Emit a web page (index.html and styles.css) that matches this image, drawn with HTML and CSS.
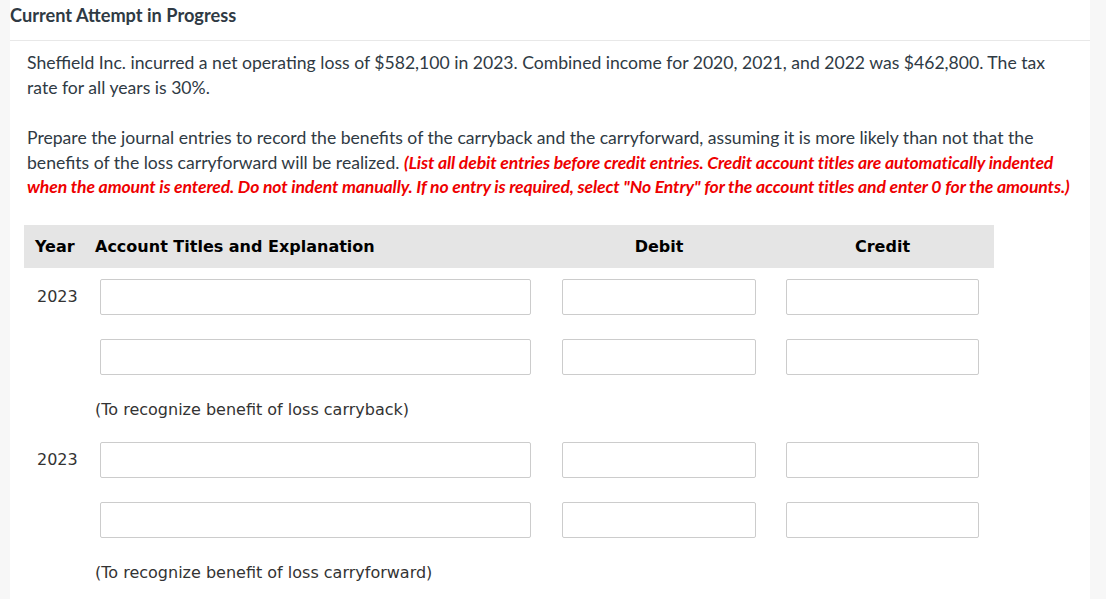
FILE: index.html
```html
<!DOCTYPE html>
<html>
<head>
<meta charset="utf-8">
<link rel="stylesheet" href="styles.css">
</head>
<body>
<div class="page">
  <div class="panel">
    <h1 class="title">Current Attempt in Progress</h1>
    <div class="content">
      <p class="para">Sheffield Inc. incurred a net operating loss of $582,100 in 2023. Combined income for 2020, 2021, and 2022 was $462,800. The tax rate for all years is 30%.</p>
      <p class="para para2">Prepare the journal entries to record the benefits of the carryback and the carryforward, assuming it is more likely than not that the benefits of the loss carryforward will be realized. <span class="warn">(List all debit entries before credit entries. Credit account titles are automatically indented when the amount is entered. Do not indent manually. If no entry is required, select "No Entry" for the account titles and enter 0 for the amounts.)</span></p>
      <div class="journal">
        <div class="head year-h">Year</div>
        <div class="head acct-h">Account Titles and Explanation</div>
        <div class="head num-h">Debit</div>
        <div class="head num-h">Credit</div>

        <div class="cell year">2023</div>
        <div class="cell acct"><input class="box" type="text"></div>
        <div class="cell num"><input class="box" type="text"></div>
        <div class="cell num"><input class="box" type="text"></div>

        <div class="cell year"></div>
        <div class="cell acct"><input class="box" type="text"></div>
        <div class="cell num"><input class="box" type="text"></div>
        <div class="cell num"><input class="box" type="text"></div>

        <div class="cell note">(To recognize benefit of loss carryback)</div>

        <div class="cell year">2023</div>
        <div class="cell acct"><input class="box" type="text"></div>
        <div class="cell num"><input class="box" type="text"></div>
        <div class="cell num"><input class="box" type="text"></div>

        <div class="cell year"></div>
        <div class="cell acct"><input class="box" type="text"></div>
        <div class="cell num"><input class="box" type="text"></div>
        <div class="cell num"><input class="box" type="text"></div>

        <div class="cell note">(To recognize benefit of loss carryforward)</div>
      </div>
    </div>
  </div>
</div>
</body>
</html>
```
FILE: styles.css
```css
html, body {
  margin: 0;
  padding: 0;
}
body {
  background: #f7f7f7;
  font-family: Lato, "Liberation Sans", sans-serif;
  color: #2f3a44;
}
.page {
  padding-left: 10px;
  width: 1080px;
  height: 599px;
  overflow: hidden;
}
.panel {
  background: #ffffff;
  height: 100%;
}
.title {
  margin: 0;
  font-size: 18.2px;
  font-weight: 700;
  line-height: 22px;
  padding: 4px 0 14px 0;
  color: #2f3a44;
  border-bottom: 1px solid #e8e8e8;
}
.content {
  padding: 10px 0 0 17px;
  width: 1050px;
}
.para {
  margin: 0;
  font-size: 17.6px;
  line-height: 24.5px;
}
.para2 {
  margin-top: 26px;
}
.warn {
  color: #ee0000;
  font-weight: 700;
  font-style: italic;
  letter-spacing: -0.13px;
}
.journal {
  margin-top: 25px;
  margin-left: -3px;
  width: 970px;
  display: grid;
  grid-template-columns: 66px 457px 224px 223px;
  font-family: "DejaVu Sans", Tahoma, sans-serif;
}
.head {
  background: #e5e5e5;
  height: 43px;
  display: flex;
  align-items: center;
  font-weight: 700;
  font-size: 16px;
  color: #000;
}
.year-h {
  padding-left: 11px;
}
.acct-h {
  padding-left: 5px;
}
.num-h {
  justify-content: center;
}
.cell {
  display: flex;
  align-items: center;
  font-size: 16px;
  color: #333;
}
.year {
  padding-left: 13px;
  height: 36px;
  margin-top: 11px;
  margin-bottom: 13px;
}
.acct {
  padding: 11px 16px 13px 10px;
}
.num {
  padding: 11px 15px 13px 15px;
}
.note {
  grid-column: 1 / 5;
  padding-left: 71px;
  padding-top: 1px;
  height: 43px;
  box-sizing: border-box;
}
.box {
  box-sizing: border-box;
  width: 100%;
  height: 36px;
  margin: 0;
  border: 1px solid #cccccc;
  border-radius: 2px;
  background: #fff;
  font: inherit;
  padding: 0 6px;
}
```
